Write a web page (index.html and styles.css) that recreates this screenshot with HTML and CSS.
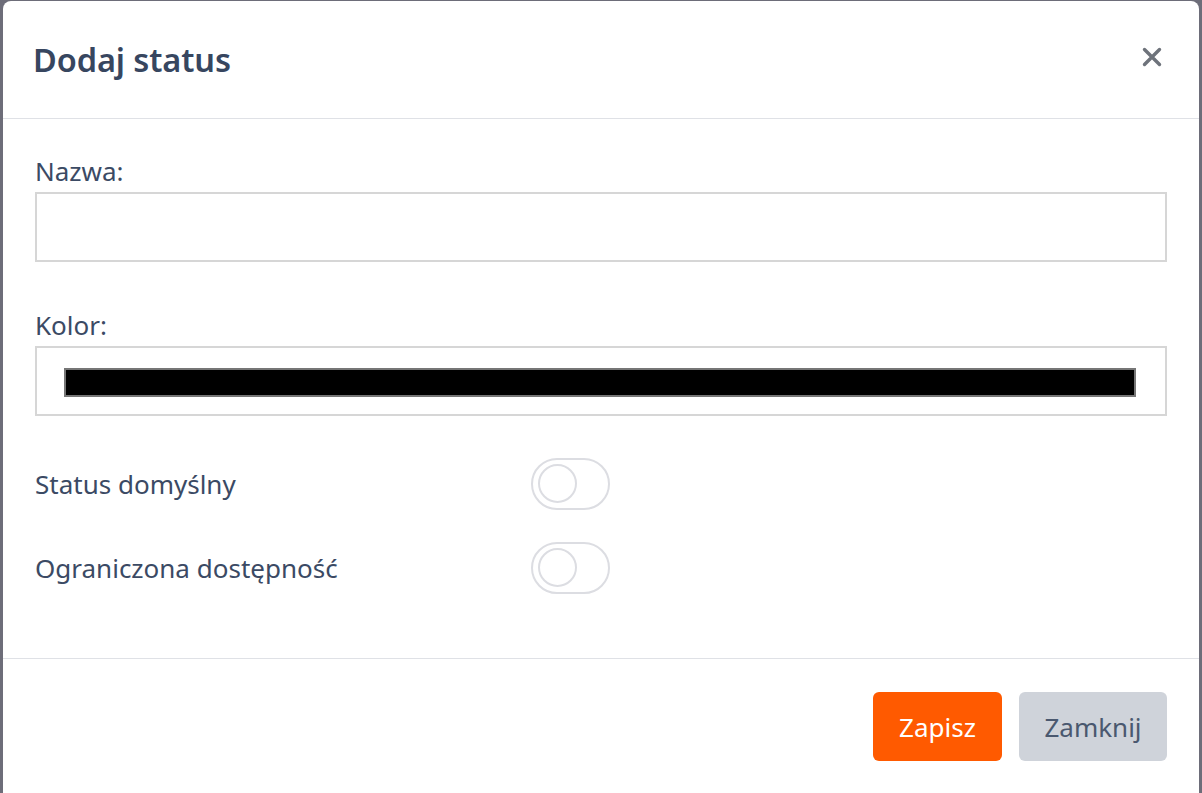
FILE: index.html
```html
<!DOCTYPE html>
<html lang="pl">
<head>
<meta charset="utf-8">
<title>Dodaj status</title>
<link rel="stylesheet" href="styles.css">
</head>
<body>
<div class="modal">
  <div class="modal-header">
    <h5 class="modal-title">Dodaj status</h5>
    <button class="close" type="button" aria-label="Close">
      <svg width="20" height="20" viewBox="0 0 20 20"><path d="M2.5 2.5 L17.5 17.5 M17.5 2.5 L2.5 17.5" stroke="#6e737b" stroke-width="3.4" stroke-linecap="round"/></svg>
    </button>
  </div>
  <div class="modal-body">
    <label class="field-label">Nazwa:</label>
    <div class="input"></div>
    <label class="field-label second">Kolor:</label>
    <div class="input color-input"><div class="swatch"></div></div>
    <div class="switch-row first-row">
      <span class="switch-label">Status domyślny</span>
      <span class="toggle"><span class="knob"></span></span>
    </div>
    <div class="switch-row">
      <span class="switch-label">Ograniczona dostępność</span>
      <span class="toggle"><span class="knob"></span></span>
    </div>
  </div>
  <div class="modal-footer">
    <button class="btn btn-save" type="button">Zapisz</button>
    <button class="btn btn-close" type="button">Zamknij</button>
  </div>
</div>
</body>
</html>
```
FILE: styles.css
```css
html, body {
  margin: 0;
  padding: 0;
  height: 100%;
  overflow: hidden;
}
body {
  background: #6d6d79;
  font-family: "Noto Sans", "Open Sans", sans-serif;
  color: #3b4a64;
}
.modal {
  margin: 1px 3px 0 3px;
  height: 800px;
  background: #ffffff;
  border-radius: 8px;
  display: flex;
  flex-direction: column;
}
.modal-header {
  height: 117px;
  flex: none;
  border-bottom: 1px solid #dfe1e6;
  display: flex;
  align-items: center;
  justify-content: space-between;
  padding: 0 37px 0 30px;
}
.modal-title {
  margin: 0;
  font-size: 32.5px;
  font-weight: 600;
  color: #37465f;
  letter-spacing: -0.1px;
}
.close {
  border: 0;
  background: transparent;
  padding: 0;
  width: 20px;
  height: 20px;
  display: flex;
  margin-top: -5px;
}
.modal-body {
  padding: 34px 32px 64px 32px;
  display: flex;
  flex-direction: column;
  flex: none;
  border-bottom: 1px solid #dfe1e6;
}
.field-label {
  font-size: 26px;
  line-height: 36px;
  margin-bottom: 3px;
  color: #3b4a64;
}
.field-label.second {
  margin-top: 45px;
}
.input {
  height: 70px;
  box-sizing: border-box;
  border: 2px solid #d6d6d6;
  background: #fff;
}
.color-input {
  padding: 20px 29px 18px 27px;
}
.swatch {
  height: 29px;
  box-sizing: border-box;
  background: #000;
  border: 2px solid #767676;
}
.switch-row {
  display: grid;
  grid-template-columns: 496px 80px;
  align-items: center;
  height: 53px;
  margin-top: 31px;
}
.switch-row.first-row {
  margin-top: 41px;
}
.switch-label {
  font-size: 26px;
  color: #3b4a64;
}
.toggle {
  width: 79px;
  height: 52px;
  box-sizing: border-box;
  border: 2px solid #dcdde2;
  border-radius: 26px;
  display: flex;
  align-items: center;
  padding-left: 5px;
}
.knob {
  width: 39px;
  height: 39px;
  box-sizing: border-box;
  border: 2px solid #dcdde2;
  border-radius: 50%;
}
.modal-footer {
  display: flex;
  justify-content: flex-end;
  gap: 17px;
  padding: 33px 32px 0 32px;
}
.btn {
  height: 69px;
  border: 0;
  border-radius: 6px;
  font-family: "Noto Sans", "Open Sans", sans-serif;
  font-size: 26px;
  padding: 0;
}
.btn-save {
  width: 129px;
  background: #ff5a00;
  color: #ffffff;
}
.btn-close {
  width: 148px;
  background: #cfd3da;
  color: #4a586f;
}
```
